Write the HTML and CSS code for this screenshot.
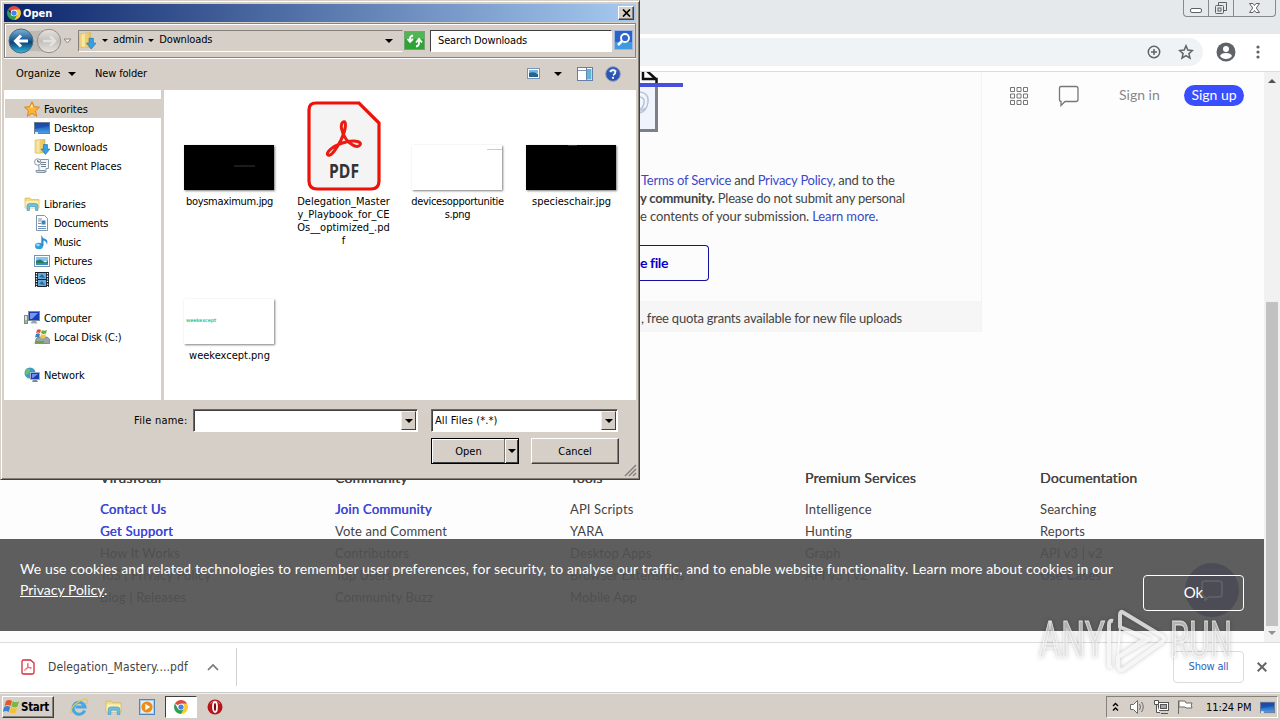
FILE: index.html
```html
<!DOCTYPE html>
<html lang="en">
<head>
  <meta charset="UTF-8">
  <title>VirusTotal</title>
  <link rel="stylesheet" href="styles.css">
</head>
<body>
  <!-- shared icons -->
  <svg class="defs" width="0" height="0">
    <defs>
      <linearGradient id="blueGrad" x1="0" y1="0" x2="0" y2="1"><stop offset="0" stop-color="#123c94"/><stop offset="1" stop-color="#4aa3ee"/></linearGradient>
      <linearGradient id="orb" x1="0" y1="0" x2="0" y2="1"><stop offset="0" stop-color="#7fb4d6"/><stop offset=".45" stop-color="#1c5c94"/><stop offset=".55" stop-color="#0b4478"/><stop offset="1" stop-color="#35b8e0"/></linearGradient>
      <linearGradient id="orbOff" x1="0" y1="0" x2="0" y2="1"><stop offset="0" stop-color="#e6e3df"/><stop offset=".5" stop-color="#c3c0bc"/><stop offset="1" stop-color="#e8e5e1"/></linearGradient>
      <linearGradient id="folderGrad" x1="0" y1="0" x2="1" y2="0"><stop offset="0" stop-color="#fdf0ae"/><stop offset="1" stop-color="#e5bd55"/></linearGradient>
      <symbol id="chrome" viewBox="0 0 16 16">
        <path d="M8 8L1.1 4A8 8 0 0 1 14.9 4z" fill="#dd4b3e"/>
        <path d="M8 8V4h6.9A8 8 0 0 1 8 16l3.5-6z" fill="#fbc92d"/>
        <path d="M8 8l3.5 2L8 16A8 8 0 0 1 1.1 4L4.6 10z" fill="#2f9e50"/>
        <circle cx="8" cy="8" r="3.8" fill="#fff"/><circle cx="8" cy="8" r="3" fill="#4680ea"/>
      </symbol>
      <symbol id="downloads" viewBox="0 0 16 16">
        <path d="M1 1h5l1-.8h4V14H1z" fill="url(#folderGrad)" stroke="#d7b65b" stroke-width=".6"/>
        <path d="M6 .5v14l-4-1.3V1.5z" fill="#fbe69a" stroke="#dcb95c" stroke-width=".5"/>
        <path d="M9.5 5.500h4V10H16l-4.500 5.500L7 10h2.500z" fill="#35a0e4" stroke="#1c6fb4" stroke-width=".6"/>
      </symbol>
      <symbol id="screen" viewBox="0 0 16 16">
        <rect x=".5" y="2.500" width="15" height="11" fill="url(#blueGrad)" stroke="#6b7c94"/>
        <path d="M1 3h14v3L1 9z" fill="#1a4bb0" opacity=".7"/><path d="M1 12h3v2H1z" fill="#dde8f4"/>
      </symbol>
      <symbol id="folder" viewBox="0 0 16 16">
        <path d="M1 2h5l1 1.500h8V12H1z" fill="#f3dc84" stroke="#cfae50" stroke-width=".6"/>
        <path d="M1.500 5h13v7h-13z" fill="#fbf0b4"/>
        <path d="M3 14.500V10q0-2.500 2.500-2.500h6Q14 7.500 14 10v4.500h-2.500V10.500h-6v4z" fill="#6dbfe4" stroke="#3f93bd" stroke-width=".6"/>
      </symbol>
      <symbol id="adobe" viewBox="0 0 36 38">
        <path d="M17 2c4-2 3 8-2 18C11 28 5 37 2 35S7 25 20 22c10-2.500 16 0 14 3s-9 1-14-6S14 4 17 2z" fill="none" stroke="currentColor" stroke-width="3"/>
      </symbol>
    </defs>
  </svg>

  <div class="browser">
    <div class="window-bar">
      <div class="window-buttons">
        <span><svg width="24" height="16"><rect x="6.500" y="8.500" width="11" height="4" rx="1.500" fill="#fff" stroke="#5c6068"/></svg></span>
        <span><svg width="24" height="16" fill="none" stroke="#5c6068"><path d="M9.500 5V2.500h8v8H15"/><rect x="6.500" y="5.500" width="8" height="8" rx="1"/><rect x="9" y="8" width="3" height="3"/></svg></span>
        <span class="wide"><svg width="40" height="16"><path d="M15.500 3.500h3.500l1.500 2 1.500-2h3.500l-3.200 4.500 3.200 4.500H22l-1.500-2-1.500 2h-3.500L18.700 8z" fill="#fff" stroke="#5c6068"/></svg></span>
      </div>
    </div>
    <div class="toolbar">
      <div class="address-bar">
        <svg width="14" height="14" viewBox="0 0 14 14" fill="none" stroke="#5f6368" stroke-width="1.500"><circle cx="7" cy="7" r="5.700"/><path d="M7 4v6M4 7h6"/></svg>
        <svg width="16" height="16" viewBox="0 0 16 16" fill="none" stroke="#5f6368" stroke-width="1.500"><path d="M8 1.800l1.800 4.300 4.600.4-3.500 3.100 1.100 4.600L8 11.700l-4 2.500 1.100-4.600L1.600 6.500l4.600-.4z"/></svg>
      </div>
      <svg class="profile" width="20" height="20" viewBox="0 0 20 20"><circle cx="10" cy="10" r="9.500" fill="#5f6368"/><circle cx="10" cy="7" r="3" fill="#fff"/><path d="M4 14q1-3 6-3t6 3q-2 3-6 3t-6-3z" fill="#fff"/></svg>
      <svg class="dots" width="4" height="16" fill="#5f6368"><circle cx="2" cy="3" r="1.600"/><circle cx="2" cy="8" r="1.600"/><circle cx="2" cy="13" r="1.600"/></svg>
    </div>

    <div class="viewport">
      <div class="page">
        <div class="top">
          <div class="upload-panel">
            <svg class="upload-art" width="50" height="64" viewBox="0 0 50 64" fill="none">
              <path d="M0 12h16v46H0z" fill="#f0f4fd"/>
              <path d="M16.500 12v46.500H0" stroke="#7e7f87" stroke-width="3"/>
              <path d="M0 20q9 1 8 10t-8 11M0 25q5 1 4 6t-4 6M0 39l6-3" stroke="#b9c2d6" stroke-width="1.500"/>
              <path d="M3 0v7h13.500V12M7 -1l10 9" stroke="#111" stroke-width="2.500"/>
              <path d="M0 13h43" stroke="#4650dd" stroke-width="4"/>
            </svg>
            <div class="terms">
              <p class="t1"><a>Terms of Service</a> and <a>Privacy Policy</a>, and to the</p>
              <p class="t2"><b>y community.</b> Please do not submit any personal</p>
              <p class="t3">e contents of your submission. <a>Learn more.</a></p>
            </div>
            <div class="choose-file">e file</div>
            <div class="quota">, free quota grants available for new file uploads</div>
          </div>
          <div class="site-nav">
            <svg width="20" height="20" fill="none" stroke="#777"><path d="M1.500 1.500h4v4h-4zM8 1.500h4v4H8zM14.500 1.500h4v4h-4zM1.500 8h4v4h-4zM8 8h4v4H8zM14.500 8h4v4h-4zM1.500 14.500h4v4h-4zM8 14.500h4v4H8zM14.500 14.500h4v4h-4z"/></svg>
            <svg class="chat" width="22" height="22" fill="none" stroke="#777" stroke-width="1.300"><path d="M3 1.500h15q2 0 2 2v11q0 2-2 2H7l-4 4v-4q-1.500 0-1.500-2v-11q0-2 1.500-2z"/></svg>
            <span class="sign-in">Sign in</span>
            <span class="sign-up">Sign up</span>
          </div>
        </div>

        <div class="footer">
          <div>
            <h4>VirusTotal</h4>
            <a class="strong">Contact Us</a><a class="strong">Get Support</a><a>How It Works</a><a>ToS | Privacy Policy</a><a>Blog | Releases</a>
          </div>
          <div>
            <h4>Community</h4>
            <a class="strong">Join Community</a><a>Vote and Comment</a><a>Contributors</a><a>Top Users</a><a>Community Buzz</a>
          </div>
          <div>
            <h4>Tools</h4>
            <a>API Scripts</a><a>YARA</a><a>Desktop Apps</a><a>Browser Extensions</a><a>Mobile App</a>
          </div>
          <div>
            <h4>Premium Services</h4>
            <a>Intelligence</a><a>Hunting</a><a>Graph</a><a>API v3 | v2</a>
          </div>
          <div>
            <h4>Documentation</h4>
            <a>Searching</a><a>Reports</a><a>API v3 | v2</a><a class="strong">Use Cases</a>
          </div>
        </div>

        <div class="chat-bubble"><svg width="24" height="22" fill="none" stroke="#fff" stroke-width="2"><path d="M5 2h14q3 0 3 3v10q0 3-3 3H9l-4 3v-3q-3 0-3-3V5q0-3 3-3z"/></svg></div>
        <div class="cookie-bar">
          <p><span class="cookie-text">We use cookies and related technologies to remember user preferences, for security, to analyse our traffic, and to enable website functionality. Learn more about cookies in our</span><br><u>Privacy Policy</u>.</p>
          <button>Ok</button>
        </div>
      </div>
      <div class="scrollbar">
        <i class="arrow up"></i>
        <div class="thumb"></div>
        <i class="arrow down"></i>
      </div>
    </div>

    <div class="download-bar">
      <svg class="pdf-small" width="14" height="16" viewBox="0 0 14 16"><path d="M2.500 1h7L13 4v9.500q0 1.500-1.500 1.500h-9Q1 15 1 13.500v-11Q1 1 2.500 1z" fill="#fff" stroke="#d9273a" stroke-width="1.300"/><svg x="3" y="4" width="8" height="8" color="#d9273a"><use href="#adobe" stroke-width="5"/></svg></svg>
      <span class="download-name">Delegation_Mastery....pdf</span>
      <svg class="chevron" width="12" height="8" fill="none" stroke="#777" stroke-width="1.700"><path d="M1 7l5-5 5 5"/></svg>
      <div class="separator"></div>
      <button class="show-all">Show all</button>
      <svg class="close" width="10" height="10" stroke="#666" stroke-width="2"><path d="M.7.7l8.600 8.600M9.300.7L.7 9.300"/></svg>
    </div>
  </div>

  <div class="taskbar">
    <div class="start">
      <svg width="17" height="16" viewBox="0 0 17 16"><path d="M3 2q3-2 6 0L7.500 7Q4.500 5 1.500 7z" fill="#e4572b"/><path d="M9.700 2.300q3 2 6.300 0L14.500 7.500q-3 1.800-6.200-.2z" fill="#78b840"/><path d="M1.200 8q3-2 6 0l-1.500 5q-3-2-6 0z" fill="#3a82cf"/><path d="M8 8.300q3 2 6.200.2l-1.500 5q-3 1.800-6.200-.2z" fill="#f4c22f"/></svg>
      Start
    </div>
    <div class="quick">
      <svg width="18" height="18" viewBox="0 0 18 18"><path d="M14.700 12.500A6 6 0 1 1 15 9H5.500" fill="none" stroke="#46a8e2" stroke-width="3"/><path d="M1.500 15.500Q-1 11 7 5t10-3-2 4" fill="none" stroke="#e9c64a" stroke-width="1.300"/></svg>
    </div>
    <div class="quick"><svg width="17" height="17"><use href="#folder"/></svg></div>
    <div class="quick"><svg width="16" height="16"><rect x=".5" y=".5" width="15" height="15" fill="#a7cdeb" stroke="#4b86bd"/><rect x="2" y="2" width="12" height="12" fill="#e5eff7"/><circle cx="8" cy="8" r="5.600" fill="#ef8b17"/><path d="M6.300 4.800L11.300 8l-5 3.200z" fill="#fff"/></svg></div>
    <div class="quick active"><svg width="14" height="14"><use href="#chrome"/></svg></div>
    <div class="quick"><svg width="16" height="16"><circle cx="8" cy="8" r="7.500" fill="#b5161b"/><path d="M3 5q5-6 10 0" fill="none" stroke="#e88" opacity=".7"/><ellipse cx="8" cy="8" rx="2" ry="5" fill="#7c080c" stroke="#fff" stroke-width="1.800"/></svg></div>
    <div class="tray">
      <svg width="7" height="10" fill="none" stroke="#000" stroke-width="1.400"><path d="M1 4l2.500-2.500L6 4M1 8.500L3.500 6 6 8.500"/></svg>
      <svg width="17" height="16" fill="none" stroke="#6c6a67"><path d="M1.500 5.500h3l4-4v13l-4-4h-3z" fill="#fff"/><path d="M10.500 5q2 3 0 6M12.500 3q3.500 5 0 10" /></svg>
      <svg width="17" height="16" fill="none" stroke="#555"><rect x="5.500" y="3.500" width="10" height="8" fill="#fff"/><rect x="7.500" y="5.500" width="6" height="4" fill="#a8a6a3"/><path d="M8 14.500h7"/><path d="M1.500 1.500h4v4h-4zM3.500 5v8.500H7" fill="#fff"/></svg>
      <svg width="17" height="16" fill="#fff" stroke="#6c6a67"><path d="M1.500 15V1.500M2 2h6l1 2h6q-1.500 2 0 5H9L8 8H2z"/></svg>
      <span class="clock">11:24 PM</span>
      <svg width="15" height="15"><use href="#screen"/></svg>
    </div>
  </div>

  <svg class="watermark" width="200" height="70" viewBox="0 0 200 70">
    <text class="mark" x="3" y="51" textLength="66" lengthAdjust="spacingAndGlyphs">ANY</text>
    <g fill="none" stroke="#fff" stroke-width="4" stroke-linejoin="round" opacity=".75">
      <path d="M77 15q-4-1-4 4v38q-1 4 3 4"/>
      <path d="M84 21V9q0-5 4-2l38 23q4 3 0 6L88 63q-5 3-6-3V51l31-18z"/>
      <path d="M84 21l23 12-25 17z" stroke-width="2"/>
    </g>
    <text class="mark" x="134" y="51" textLength="62" lengthAdjust="spacingAndGlyphs">RUN</text>
  </svg>

  <div class="dialog">
    <div class="dialog-title">
      <svg width="14" height="14"><use href="#chrome"/></svg>
      <span>Open</span>
      <div class="dialog-close"><svg width="9" height="8" stroke="#000" stroke-width="1.700"><path d="M1 .5l7 7M8 .5l-7 7"/></svg></div>
    </div>

    <div class="nav-bar">
      <svg class="orbs" width="66" height="28" viewBox="0 0 66 28">
        <path d="M13 2q14 4 28 0 8 0 13 12-5 12-13 12-14-4-28 0z" fill="#bdbab6"/>
        <circle cx="14" cy="14" r="12" fill="url(#orb)" stroke="#4d6b82"/>
        <path d="M21 14H9M14 8.500L8.500 14l5.500 5.500" fill="none" stroke="#fff" stroke-width="3"/>
        <circle cx="42" cy="14" r="11.700" fill="url(#orbOff)" stroke="#92908d"/>
        <path d="M36 14h11M43 9l5 5-5 5" fill="none" stroke="#e4e1dd" stroke-width="2.500"/>
        <path d="M57 12h7l-3.500 4z" fill="#eee" stroke="#8a8885"/>
      </svg>
      <div class="path-box">
        <svg width="17" height="18"><use href="#downloads"/></svg>
        <i class="tri"></i><span class="crumb-admin">admin</span><i class="tri"></i><span class="crumb">Downloads</span>
        <i class="tri last"></i>
      </div>
      <svg class="refresh" width="21" height="20" viewBox="0 0 21 20"><rect x=".5" y=".5" width="20" height="18" fill="#2fa336" stroke="#73a474"/><path d="M1 1h19v7H1z" fill="#67c269" opacity=".6"/><path d="M9 4.500Q6 5 6 8v2M3.500 8L6 11l3-3M12 15.500q3-.5 3-3.500v-2M12 11.500L15 8l3 3.500" fill="none" stroke="#fff" stroke-width="1.800"/></svg>
      <div class="search-box">Search Downloads</div>
      <svg class="search-btn" width="19" height="21" viewBox="0 0 19 21"><rect width="19" height="20" fill="#2b62c7"/><path d="M0 12h19v8H0z" fill="#49b1e6" opacity=".7"/><rect x=".5" y=".5" width="18" height="19" fill="none" stroke="#9bb6e4"/><circle cx="11" cy="8" r="4" fill="#3167c8" stroke="#fff" stroke-width="1.800"/><path d="M8 11l-4 4" stroke="#fff" stroke-width="2.500"/></svg>
    </div>

    <div class="command-bar">
      <span class="organize">Organize</span><i class="tri big"></i><span class="new-folder">New folder</span>
      <svg class="view" width="13" height="11"><rect x=".5" y=".5" width="12" height="10" fill="#fff" stroke="#7894b8"/><rect x="2" y="2" width="9" height="3" fill="#71b4e6"/><path d="M2 5q5-2 9 1v3H2z" fill="#24658f"/></svg>
      <i class="tri big"></i>
      <svg class="pane" width="16" height="14"><rect x=".5" y=".5" width="15" height="13" fill="#fff" stroke="#667fa8"/><path d="M1 3.500h9" stroke="#7f96b8"/><rect x="10" y="2" width="4.500" height="10.500" fill="#62b5d5"/><path d="M9.500 1v12" stroke="#6a87ac"/></svg>
      <svg class="help" width="16" height="16"><circle cx="8" cy="8" r="7.300" fill="#2a55b0" stroke="#8b99b8"/><path d="M3 5q5-5 10 0-5 3-10 0z" fill="#7fa3e6" opacity=".6"/><path d="M5.500 6.200Q5.700 4 8 4t2.400 2-2.300 3.200" fill="none" stroke="#fff" stroke-width="1.700"/><circle cx="8" cy="11.800" r="1.100" fill="#fff"/></svg>
    </div>

    <div class="panes">
      <div class="tree">
        <div class="row root selected"><svg><path d="M8 .8l2.200 4.900 5.300.5-4 3.700 1.200 5.300L8 12.400l-4.700 2.800 1.200-5.300-4-3.700 5.300-.5z" fill="#fbb63a" stroke="#dd8420"/><path d="M8 3l1 3.500H6z" fill="#fff1b8"/></svg><span>Favorites</span></div>
        <div class="row"><svg><use href="#screen"/></svg><span>Desktop</span></div>
        <div class="row"><svg><use href="#downloads"/></svg><span>Downloads</span></div>
        <div class="row"><svg><path d="M4 1.500h10.500v9H12V14H5v-3z" fill="#f3f5f7" stroke="#8b98a8"/><path d="M7 4.500h5M7 6.500h5M7 8.500h5" stroke="#6f8398"/><path d="M2 12.500h9v2H3q-1.500-.5-1-2z" fill="#cfd6de" stroke="#8795a5"/><circle cx="3.800" cy="4" r="3.200" fill="#fff" stroke="#8794a3"/><path d="M3.800 2v2H6" fill="none" stroke="#555"/></svg><span>Recent Places</span></div>
        <div class="row root gap"><svg><use href="#folder"/></svg><span>Libraries</span></div>
        <div class="row"><svg><path d="M2.500.5h8l3 3v12h-11z" fill="#fff" stroke="#8194ac"/><path d="M4 4h4M4 6h3M4 11.500h8M4 13.500h8M4 8.500h3" stroke="#6d8fb8"/><rect x="7.500" y="5.500" width="4" height="4" fill="#3c82b5"/></svg><span class="snug">Documents</span></div>
        <div class="row"><svg><ellipse cx="5" cy="12" rx="4" ry="3.200" fill="#309ddd"/><path d="M7.300 12V1q1 3 4 4t1.700 6q-.5-4-3.500-4.500V12z" fill="#2b8ed2"/><ellipse cx="4" cy="11" rx="1.800" ry="1.200" fill="#9cdcfa"/></svg><span class="snug">Music</span></div>
        <div class="row"><svg><rect x=".5" y="2.500" width="15" height="11" fill="#fff" stroke="#7892b3"/><rect x="2" y="4" width="12" height="4" fill="#83c5ef"/><path d="M2 8q4-3 7 0t5-1v5H2z" fill="#29795f"/><path d="M2 10h12v2H2z" fill="#388ec2"/></svg><span>Pictures</span></div>
        <div class="row"><svg><path d="M1 0h14v15H1z" fill="#17222e"/><path d="M4 1h8v6H4zM4 8h8v6H4z" fill="#66aada"/><path d="M5 5l3-3 3 4zM5 12l3-3 3 4z" fill="#286899"/><path d="M2.500 1v14M13.500 1v14" stroke="#fff" stroke-width="1.300" stroke-dasharray="1.300 1.300"/></svg><span class="snug">Videos</span></div>
        <div class="row root gap"><svg><rect x="4.500" y="1.500" width="11" height="9" fill="#173dbb" stroke="#7a8ba3"/><path d="M6 3h8L8 9H6z" fill="#7594ef"/><path d="M8 11h4l1.500 2.500h-7z" fill="#9ba6b4"/><rect x=".5" y="5.500" width="3" height="8" fill="#d7dfdf" stroke="#7e8c92"/><path d="M2 10v3" stroke="#5a9e35"/></svg><span class="snug">Computer</span></div>
        <div class="row"><svg><path d="M2 10l2-2h9l2.500 2v4.500H1z" fill="#9ba5a9" stroke="#667176" stroke-width=".7"/><path d="M2 12h8v2H2z" fill="#68a646"/><path d="M3 1q2-1.500 4 0L6 4Q4 3 2 4z" fill="#e2522e"/><path d="M8 1q2 1.500 5 0l-1 3.500q-3 1-5-.5z" fill="#65ae45"/><path d="M2 5q2-1.500 4 0L5 8.500q-2-1-4 0z" fill="#377dc9"/><path d="M7 5q2 1.500 5 0l-1 4q-3 1-5-.5z" fill="#f4c536"/></svg><span class="snug">Local Disk (C:)</span></div>
        <div class="row root gap"><svg><circle cx="6" cy="6" r="5.500" fill="#3a9dc5"/><path d="M3 1.500q4 0 3 3T2 8Q0 4 3 1.500z" fill="#69bd75"/><rect x="6.500" y="5.500" width="9" height="7" fill="#183db5" stroke="#a1b2ca"/><path d="M8 7h6l-5 4H8z" fill="#6d8fea"/><path d="M9 13h4l1 2H8z" fill="#7c899b"/></svg><span>Network</span></div>
      </div>
      <div class="files">
        <div class="file"><div class="thumb-box"><div class="thumbnail dark"><i class="smudge"></i></div></div><span class="tight">boysmaximum.jpg</span></div>
        <div class="file">
          <div class="thumb-box">
            <svg class="pdf-icon" width="74" height="90" viewBox="0 0 74 90"><path d="M9 2h43l20 20v58q0 8-8 8H10q-8 0-8-8V9q0-7 7-7z" fill="#f4f4f4" stroke="#ec1109" stroke-width="3.200"/><svg x="18" y="19" width="38" height="38" color="#ec1b12"><use href="#adobe"/></svg><text x="22" y="77" textLength="30" lengthAdjust="spacingAndGlyphs">PDF</text></svg>
          </div>
          <span>Delegation_Master<br>y_Playbook_for_CE<br>Os__optimized_.pd<br>f</span>
        </div>
        <div class="file"><div class="thumb-box"><div class="thumbnail light"><i class="corner"></i></div></div><span class="tight">devicesopportunitie<br>s.png</span></div>
        <div class="file"><div class="thumb-box"><div class="thumbnail dark"><i class="notch"></i></div></div><span>specieschair.jpg</span></div>
        <div class="file"><div class="thumb-box"><div class="thumbnail light"><b>weekexcept</b></div></div><span>weekexcept.png</span></div>
      </div>
    </div>

    <div class="dialog-form">
      <label>File name:</label>
      <div class="combo name"><span></span><div class="drop"><i class="tri"></i></div></div>
      <div class="combo type"><span>All Files (*.*)</span><div class="drop"><i class="tri"></i></div></div>
    </div>
    <div class="dialog-actions">
      <div class="open-btn"><span>Open</span><div class="split"><i class="tri"></i></div></div>
      <div class="cancel-btn">Cancel</div>
    </div>
    <svg class="grip" width="13" height="13" stroke="#85817c" stroke-width="1.500"><path d="M12 1L1 12M12 5l-7 7M12 9l-3 3"/></svg>
  </div>
</body>
</html>
```

FILE: styles.css
```css
* {
  margin: 0;
  padding: 0;
  box-sizing: border-box;
}

body {
  width: 1280px;
  height: 720px;
  overflow: hidden;
  position: relative;
  font-family: "DejaVu Sans Condensed", "DejaVu Sans", sans-serif;
  font-stretch: condensed;
  font-size: 11px;
  color: #000;
  background: #d5cfc7;
}

svg {
  display: block;
  flex: none;
}

.defs {
  position: absolute;
}

/* Browser */
.browser {
  height: 693px;
  display: flex;
  flex-direction: column;
  background: #fff;
}

.window-bar {
  height: 34px;
  background: #e5e9ec;
  display: flex;
  justify-content: flex-end;
  padding-right: 4px;
}

.window-buttons {
  display: flex;
  height: 17px;
  border: 1px solid #858a90;
  border-top: none;
  border-radius: 0 0 4px 4px;
}

.window-buttons span {
  width: 25px;
  border-right: 1px solid #858a90;
}

.window-buttons .wide {
  width: 41px;
  border-right: none;
}

.toolbar {
  height: 38px;
  display: flex;
  align-items: center;
  border-bottom: 1px solid #dadce0;
  padding-bottom: 1px;
}

.address-bar {
  width: 1203px;
  height: 28px;
  border-radius: 0 14px 14px 0;
  background: #f0f3f5;
  display: flex;
  align-items: center;
  justify-content: flex-end;
  gap: 17px;
  padding-right: 9px;
}

.profile {
  margin-left: 13px;
}

.dots {
  margin-left: 20px;
}

.viewport {
  height: 570px;
  display: flex;
}

.page {
  width: 1264px;
  position: relative;
  overflow: hidden;
  background: #fdfdfe;
  font-family: "Lato", sans-serif;
  font-stretch: normal;
  color: #444;
}

.top {
  display: flex;
}

.upload-panel {
  width: 982px;
  height: 260px;
  padding-left: 640px;
  background: #fcfcfc;
  border-right: 1px solid #f3f3f3;
}

.terms {
  padding-top: 35px;
  font-size: 13px;
  line-height: 18px;
  letter-spacing: -.22px;
  white-space: nowrap;
}

.terms .t1 {
  padding-left: 1px;
}

.terms .t3 {
  letter-spacing: -.12px;
}

.terms a {
  color: #3b48c8;
}

.choose-file {
  width: 69px;
  height: 36px;
  margin-top: 20px;
  border: 1px solid #1310a0;
  border-left: none;
  border-radius: 0 4px 4px 0;
  color: #0b00cc;
  font-size: 14px;
  font-weight: bold;
  letter-spacing: -.4px;
  line-height: 33px;
}

.quota {
  height: 31px;
  margin-top: 20px;
  margin-left: -640px;
  padding-left: 641px;
  background: #f6f6f6;
  font-size: 13px;
  letter-spacing: -.22px;
  line-height: 34px;
}

.site-nav {
  display: flex;
  height: 48px;
  align-items: center;
  padding-left: 27px;
  font-size: 14px;
}

.chat {
  margin-left: 29px;
}

.sign-in {
  width: 42px;
  margin-left: 39px;
  margin-top: -3px;
  color: #888;
  white-space: nowrap;
}

.sign-up {
  width: 60px;
  height: 21px;
  margin-left: 23px;
  margin-top: -2px;
  border-radius: 11px;
  background: #394eff;
  color: #fff;
  line-height: 20px;
  text-align: center;
}

.footer {
  display: grid;
  grid-template-columns: repeat(5, 235px);
  padding: 136px 0 0 100px;
  font-size: 13px;
  letter-spacing: .12px;
  white-space: nowrap;
}

.footer h4 {
  height: 30px;
  font-size: 14px;
  font-weight: normal;
  line-height: 20px;
  text-shadow: .3px 0 #444;
}

.footer a {
  display: block;
  height: 22px;
  line-height: 22px;
}

.footer a.strong {
  color: #3c46d6;
  letter-spacing: .3px;
  text-shadow: .4px 0 #3c46d6;
}

.chat-bubble {
  position: absolute;
  left: 1185px;
  top: 491px;
  width: 54px;
  height: 54px;
  border-radius: 50%;
  background: #2020a0;
  padding: 16px 15px;
}

.cookie-bar {
  position: absolute;
  left: 0;
  right: 0;
  top: 467px;
  height: 92px;
  padding: 19px 20px 20px;
  display: flex;
  justify-content: space-between;
  background: rgba(80, 80, 80, .92);
  color: #fff;
  font-size: 14px;
  line-height: 21px;
  white-space: nowrap;
}

.cookie-text {
  letter-spacing: .115px;
}

.cookie-bar button {
  width: 101px;
  height: 36px;
  margin-top: 17px;
  border: 1px solid #fff;
  border-radius: 4px;
  background: none;
  color: #fff;
  font: 15px "Lato", sans-serif;
  padding-bottom: 2px;
}

.scrollbar {
  width: 16px;
  display: flex;
  flex-direction: column;
  justify-content: space-between;
  align-items: center;
  background: #f1f1f1;
  padding: 7px 0 7px;
}

.thumb {
  width: 12px;
  height: 324px;
  margin-top: auto;
  margin-bottom: 5px;
  background: #c1c1c1;
}

.arrow {
  border: 4px solid transparent;
  border-top: none;
  border-bottom-color: #505050;
}

.arrow.down {
  border-top: 4px solid #909090;
  border-bottom: none;
}

/* Downloads shelf */
.download-bar {
  height: 51px;
  display: flex;
  align-items: center;
  border-top: 1px solid #dcdcdc;
  border-bottom: 1px solid #c9c9c9;
  padding: 0 13px 2px 21px;
}

.download-name {
  width: 141px;
  margin-left: 13px;
  font-size: 12px;
  letter-spacing: .12px;
  color: #444;
  white-space: nowrap;
}

.chevron {
  margin-left: 18px;
}

.separator {
  width: 1px;
  height: 38px;
  margin-left: 17px;
  background: #d2d2d2;
}

.show-all {
  width: 71px;
  height: 32px;
  margin-left: auto;
  border: 1px solid #dadce0;
  border-radius: 4px;
  background: #fff;
  color: #2b63bd;
  font-family: inherit;
  font-stretch: condensed;
  font-size: 11px;
  letter-spacing: -.2px;
}

.close {
  margin-left: 13px;
}

/* Taskbar */
.taskbar {
  height: 27px;
  display: flex;
  align-items: center;
  border-top: 1px solid #f3f0eb;
  background: #d5cfc7;
  padding: 1px 2px 1px;
}

.start {
  width: 52px;
  height: 22px;
  margin-right: 9px;
  display: flex;
  align-items: center;
  gap: 1px;
  border: 1px solid;
  border-color: #fff #404040 #404040 #fff;
  box-shadow: inset -1px -1px #858079;
  font-weight: bold;
  font-size: 11.500px;
  letter-spacing: -.3px;
}

.quick {
  width: 32px;
  height: 22px;
  margin-right: 2px;
  display: flex;
  align-items: center;
  justify-content: center;
  border: 1px solid transparent;
}

.quick.active {
  background: #fff;
  border-color: #404040 #fff #fff #404040;
}

.tray {
  width: 172px;
  height: 22px;
  margin-left: auto;
  display: flex;
  align-items: center;
  border: 1px solid;
  border-color: #858079 #fff #fff #858079;
  padding: 0 2px 0 5px;
  gap: 7px;
}

.tray svg:first-child {
  margin-right: 3px;
}

.clock {
  width: 46px;
  margin: 0 1px 0 5px;
  letter-spacing: -.1px;
  white-space: nowrap;
}

.watermark {
  position: absolute;
  left: 1036px;
  top: 606px;
  filter: drop-shadow(0 0 2px rgba(0, 0, 0, .3));
}

.mark {
  font: 50px Roboto, sans-serif;
  fill: #e7e7e7;
  fill-opacity: .65;
  stroke: #fff;
  stroke-width: 1px;
  stroke-opacity: .7;
}

/* Open dialog */
.dialog {
  position: absolute;
  left: 0;
  top: 0;
  width: 640px;
  height: 480px;
  background: #d5cfc7;
  border: 1px solid;
  border-color: #d5cfc7 #404040 #404040 #d5cfc7;
  box-shadow: inset 1px 1px #fff, inset -1px -1px #858079;
  padding: 3px;
  white-space: nowrap;
}

.dialog-title {
  height: 18px;
  display: flex;
  align-items: center;
  gap: 2px;
  padding: 0 2px 0 3px;
  background: linear-gradient(90deg, #0a246a, #a6caf0);
  color: #fff;
  font-weight: bold;
}

.dialog-close {
  width: 16px;
  height: 14px;
  margin-left: auto;
  display: flex;
  align-items: center;
  justify-content: center;
  background: #d5cfc7;
  border: 1px solid;
  border-color: #fff #404040 #404040 #fff;
  box-shadow: inset -1px -1px #858079;
}

.nav-bar {
  height: 35px;
  display: flex;
  align-items: center;
  border: 1px solid #85817c;
  box-shadow: inset 1px 1px #fff, 0 1px #fff;
  margin-top: 1px;
}

.orbs {
  margin-left: 2px;
}

.path-box {
  width: 325px;
  height: 22px;
  margin-left: 5px;
  display: flex;
  align-items: center;
  border: 1px solid;
  border-color: #858079 #d5cfc7 #fff #858079;
}

.crumb-admin,
.crumb {
  margin-top: -2px;
  letter-spacing: -.15px;
}

.tri {
  border: 3px solid transparent;
  border-top-color: #000;
  border-bottom: none;
}

.path-box .tri {
  margin: 0 5px 0 6px;
}

.path-box .crumb-admin + .tri {
  margin-left: 5px;
}

.path-box .tri.last {
  margin: 0 9px 0 auto;
  border-width: 4px 4px 0;
}

.tri.big {
  border-width: 4px 4px 0;
}

.refresh {
  margin-left: 1px;
}

.search-box {
  width: 182px;
  height: 22px;
  margin-left: 5px;
  padding-left: 7px;
  line-height: 20px;
  letter-spacing: -.15px;
  background: #fff;
  border: 1px solid;
  border-color: #404040 #fff #fff #404040;
}

.search-btn {
  margin-left: 2px;
}

.command-bar {
  height: 32px;
  display: flex;
  align-items: center;
  padding: 0 15px 1px 12px;
}

.organize {
  width: 45px;
}

.command-bar .organize + .tri {
  margin-left: 7px;
}

.new-folder {
  margin-left: 19px;
  letter-spacing: -.15px;
}

.view {
  margin-left: auto;
  margin-right: 14px;
}

.pane {
  margin: 0 12px 0 15px;
}

.panes {
  height: 310px;
  display: flex;
  background: #fff;
}

.tree {
  width: 160px;
  padding: 9px 0 0 1px;
  border-right: 3px solid #d5cfc7;
}

.row {
  height: 19px;
  display: flex;
  align-items: center;
  padding-left: 29px;
}

.row svg {
  width: 16px;
  height: 16px;
  margin-right: 4px;
}

.row span {
  padding-top: 2px;
  letter-spacing: -.1px;
}

.row .snug {
  letter-spacing: -.25px;
}

.row.root {
  padding-left: 19px;
}

.row.selected {
  background: #d5cfc7;
}

.row.gap {
  margin-top: 19px;
}

.files {
  flex: 1;
  display: grid;
  grid-template-columns: repeat(4, 114px);
  grid-template-rows: 154px 154px;
  padding: 6px 0 0 8px;
}

.file {
  text-align: center;
  line-height: 13px;
}

.thumb-box {
  height: 98px;
  display: flex;
  align-items: flex-end;
  justify-content: center;
  padding-bottom: 4px;
}

.pdf-icon {
  margin: 0 0 -1px 2px;
}

.file > span {
  display: block;
  padding: 1px 0 0 1px;
}

.file > .tight {
  letter-spacing: -.3px;
}

.thumbnail {
  width: 90px;
  height: 45px;
  display: flex;
  box-shadow: 1px 1px 2px rgba(0, 0, 0, .5);
}

.dark {
  background: #000;
}

.light {
  background: #fff;
}

.smudge {
  width: 21px;
  height: 2px;
  margin: 20px 0 0 50px;
  background: #1c1c1c;
}

.corner {
  width: 15px;
  height: 1px;
  margin: 4px 0 0 auto;
  background: #ccc;
}

.notch {
  width: 9px;
  height: 1px;
  margin-left: 42px;
  background: #333;
}

.thumbnail b {
  padding: 16px 0 0 2px;
  font-size: 5px;
  line-height: 10px;
  color: #3ccc9f;
}

.pdf-icon text {
  font: bold 19px "Open Sans", sans-serif;
  fill: #333;
}

.dialog-form {
  height: 36px;
  display: flex;
  align-items: center;
  padding: 5px 0 0 130px;
}

.dialog-form label {
  width: 58px;
  letter-spacing: .25px;
}

.combo {
  height: 23px;
  display: flex;
  align-items: center;
  background: #fff;
  border: 1px solid;
  border-color: #6b6762 #fff #fff #6b6762;
  box-shadow: inset 1px 1px #404040;
  padding: 1px 1px 1px 3px;
}

.combo.name {
  width: 225px;
  margin-left: 1px;
}

.combo.type {
  width: 187px;
  margin-left: 13px;
}

.combo span {
  letter-spacing: .1px;
}

.drop {
  width: 15px;
  height: 19px;
  margin-left: auto;
  display: flex;
  align-items: center;
  justify-content: center;
  background: #d5cfc7;
  border: 1px solid;
  border-color: #eee #404040 #404040 #eee;
}

.drop .tri {
  border-width: 4px 4px 0;
}

.dialog-actions {
  display: flex;
  padding: 2px 0 0 427px;
}

.open-btn,
.cancel-btn {
  width: 88px;
  height: 26px;
  line-height: 25px;
  text-align: center;
  border: 1px solid;
  border-color: #fff #404040 #404040 #fff;
  box-shadow: inset -1px -1px #858079;
}

.open-btn {
  display: flex;
  margin-right: 12px;
  border-color: #000;
  box-shadow: inset 1px 1px #fff, inset -1px -1px #404040;
}

.open-btn span {
  width: 72px;
  padding-left: 1px;
}

.split {
  width: 14px;
  display: flex;
  align-items: center;
  justify-content: center;
  border-left: 1px solid #77736e;
  box-shadow: inset 1px 1px #fff;
}

.split .tri {
  border-width: 4px 4px 0;
}

.grip {
  position: absolute;
  right: 2px;
  bottom: 2px;
}
```
